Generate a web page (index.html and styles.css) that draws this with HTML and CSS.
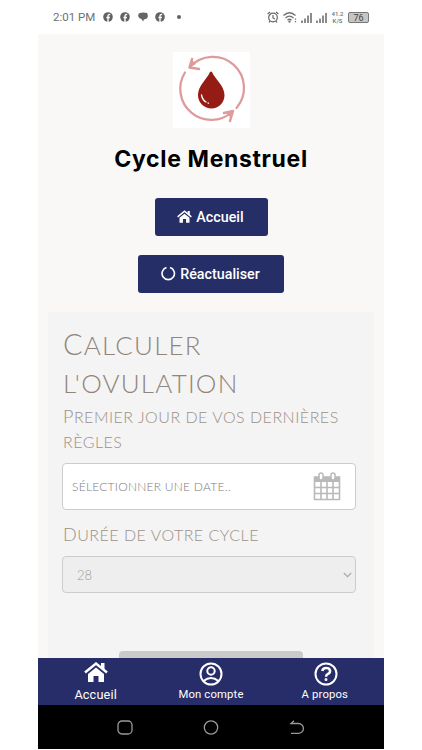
FILE: index.html
```html
<!DOCTYPE html>
<html lang="fr">

<head>
    <meta charset="UTF-8">
    <meta name="viewport" content="width=device-width, initial-scale=1.0">
    <title>Cycle Menstruel</title>
    <link rel="stylesheet" href="styles.css">
</head>

<body>
    <svg class="defs" width="0" height="0">
        <symbol id="home" viewBox="0 0 24 20">
            <path d="M1 10.5 12 1.5l11 9" fill="none" stroke="currentColor" stroke-width="2.4"/>
            <path d="M17 1h3.5v8L17 6zM12 5.5l8 6.5v8h-5.5v-6h-5v6H4v-8z" fill="currentColor"/>
        </symbol>
        <symbol id="facebook" viewBox="0 0 10 10">
            <circle cx="5" cy="5" r="4.8" fill="#626262"/>
            <path d="M5 10V4.3c0-1.4.7-2 2.2-1.8M3.4 5.5h3.5" fill="none" stroke="#fff" stroke-width="1.35"/>
        </symbol>
        <symbol id="signal" viewBox="0 0 11 11">
            <path d="M1 11V8.500M4 11V6.500M7 11V3.500M10 11V1" stroke="#707070" stroke-width="1.600"/>
        </symbol>
    </svg>

    <div class="phone">
        <!-- barre d'état -->
        <div class="status">
            <span class="time">2:01 PM</span>
            <svg class="fb" width="10" height="10"><use href="#facebook"/></svg>
            <svg class="fb" width="10" height="10"><use href="#facebook"/></svg>
            <svg class="fb" width="10" height="10" viewBox="0 0 10 10"><path d="M2 1Q5 0 9 1q1 1 .8 4Q9 7 6 7.500L5 9.500 3.500 7Q0 6 .2 3 .5 1 2 1z" fill="#666"/></svg>
            <svg class="fb" width="10" height="10"><use href="#facebook"/></svg>
            <span class="dot"></span>
            <div class="status_right">
                <svg width="12" height="12" viewBox="0 0 12 12" fill="none" stroke="#666" stroke-width="1.2"><circle cx="6" cy="6.500" r="4.300"/><path d="M.6 3 3 1M11.400 3 9 1M6 4v3l2 1M3 10l-1 1.500M9 10l1 1.500"/></svg>
                <svg width="14" height="12" viewBox="0 0 14 12" fill="none" stroke="#707070" stroke-width="1.3"><path d="M.5 4.500q6-5.500 12 0M2.500 7q4-3.800 8 0M4.500 9.200q2-1.800 4 0"/><circle cx="6.500" cy="10.700" r=".5"/><path d="M12.500 7.500v1.300M12.500 10v1.300"/></svg>
                <svg width="11" height="11"><use href="#signal"/></svg>
                <svg width="11" height="11"><use href="#signal"/></svg>
                <span class="speed"><span>41.2</span><span>K/S</span></span>
                <span class="battery">76</span>
            </div>
        </div>

        <main class="content">
            <svg class="logo" width="77" height="76" viewBox="0 0 77 76">
                <path d="M17 15A31 31 0 0 1 63.500 56M59 60A31 31 0 0 1 12 20.500" fill="none" stroke="#df9b9c" stroke-width="2.300" stroke-linecap="round"/>
                <path d="M19 7 16.500 15.500 26 17M51 61l9-2-3 10" fill="none" stroke="#df9b9c" stroke-width="2.500" stroke-linecap="round" stroke-linejoin="round"/>
                <path d="M19 8l-2 7 6-3zM53 61l7-2-2 7z" fill="#df9b9c"/>
                <path d="M37 20q1-1 2 0C42 27 51.500 34 51.500 43c0 8-6 13.500-13 13.500S25 51 25 43c0-9 9-16 12-23z" fill="#951b15"/>
                <path d="M28.500 43q1 5 4.500 7M35 51l.5.200" fill="none" stroke="#fff" stroke-width="1.300" stroke-linecap="round"/>
            </svg>
            <h1>Cycle Menstruel</h1>
            <button class="btn btn_home"><svg width="15" height="13"><use href="#home"/></svg>Accueil</button>
            <button class="btn btn_reload"><svg width="15" height="15" viewBox="0 0 15 15"><path d="M9 1.500a6.200 6.200 0 1 1-3.500 0" fill="none" stroke="#fff" stroke-width="1.600"/></svg>Réactualiser</button>

            <section class="card">
                <h2><span class="line">Calculer</span><span class="line">l'ovulation</span></h2>
                <p class="label label_day"><span class="line">Premier jour de vos dernières</span><span class="line">règles</span></p>
                <div class="field date">
                    <span class="placeholder">Sélectionner une date..</span>
                    <svg width="28" height="29" viewBox="0 0 28 29">
                        <path d="M1 5h26v5H1z" fill="#b9b9b9"/>
                        <path d="M1.500 5h25v22.500h-25zM8 9v18M14 9v18M20 9v18M1 15.500h26M1 21.500h26" fill="none" stroke="#b9b9b9" stroke-width="1.600"/>
                        <rect x="6" y="1" width="4" height="7" rx="2" fill="#fff" stroke="#b9b9b9" stroke-width="1.500"/>
                        <rect x="18" y="1" width="4" height="7" rx="2" fill="#fff" stroke="#b9b9b9" stroke-width="1.500"/>
                    </svg>
                </div>
                <p class="label label_cycle"><span class="line">Durée de votre cycle</span></p>
                <div class="field select">
                    <span>28</span>
                    <svg width="9" height="6" viewBox="0 0 9 6"><path d="m.8 1 3.700 3.700L8.200 1" fill="none" stroke="#a8a8a8" stroke-width="1.200"/></svg>
                </div>
                <div class="submit"></div>
            </section>
        </main>

        <nav class="tabs">
            <a class="tab tab_active"><svg width="24" height="20"><use href="#home"/></svg>Accueil</a>
            <a class="tab"><svg width="24" height="24" viewBox="0 0 24 24" fill="none" stroke="#fff" stroke-width="2"><circle cx="12" cy="12" r="10.500"/><circle cx="12" cy="9" r="3.700"/><path d="M4.500 19q7.500-6 15 0"/></svg>Mon compte</a>
            <a class="tab tab_about"><svg width="24" height="24" viewBox="0 0 24 24" fill="none" stroke="#fff"><circle cx="12" cy="12" r="10.500" stroke-width="2"/><path d="M8.300 9q.5-3 3.700-3c5 0 5 4.500 2 5.800-1.500.8-2 1.200-2 3" stroke-width="2.500"/><circle cx="12" cy="17.500" r=".6" stroke-width="1.800"/></svg><span>A propos</span></a>
        </nav>

        <div class="system">
            <svg width="16" height="15" viewBox="0 0 16 15"><rect x="1" y="1" width="14" height="13" rx="4"/></svg>
            <svg width="16" height="15" viewBox="0 0 16 15"><circle cx="8" cy="7.500" r="6.700"/></svg>
            <svg width="16" height="15" viewBox="0 0 16 15"><path d="M5 .8 2 3.500h7.500a4.900 4.900 0 0 1 0 9.800H2"/></svg>
        </div>
    </div>
</body>

</html>
```

FILE: styles.css
```css
* {
    box-sizing: border-box;
}

body {
    margin: 0;
    background-color: #fff;
    font-family: Roboto, "Liberation Sans", sans-serif;
}

svg {
    display: block;
    flex: none;
}

.defs {
    position: absolute;
}

.phone {
    width: 346px;
    height: 749px;
    margin-left: 38px;
    display: flex;
    flex-direction: column;
    overflow: hidden;
}

/* barre d'état */
.status {
    height: 34px;
    flex: none;
    display: flex;
    align-items: center;
    padding: 0 15px;
    color: #707070;
}

.time {
    width: 50px;
    font-size: 11.5px;
    white-space: nowrap;
}

.fb {
    margin-right: 7.3px;
}

.dot {
    width: 4px;
    height: 4px;
    margin-left: 5px;
    border-radius: 50%;
    background-color: #626262;
}

.status_right {
    margin-left: auto;
    display: flex;
    align-items: center;
    gap: 4px;
}

.speed {
    width: 13px;
    display: flex;
    flex-direction: column;
    align-items: center;
    font-size: 6px;
    line-height: 7px;
    font-weight: 500;
}

.battery {
    width: 21px;
    height: 11px;
    border: 1px solid #777;
    border-radius: 2px;
    background-color: #c6c6c6;
    color: #444;
    font-size: 9px;
    line-height: 10px;
    text-align: center;
}

.content {
    flex: 1;
    min-height: 0;
    overflow: hidden;
    display: flex;
    flex-direction: column;
    align-items: center;
    padding: 18px 10px 0;
    background-color: #f9f8f6;
}

.logo {
    background-color: #fff;
}

h1 {
    margin: 15px 0 23px;
    font-family: Inter, "Liberation Sans", sans-serif;
    font-size: 23px;
    line-height: 32px;
    font-weight: 700;
    letter-spacing: 0.65px;
    color: #000;
    white-space: nowrap;
}

.btn {
    height: 38px;
    flex: none;
    display: flex;
    align-items: center;
    justify-content: center;
    gap: 4px;
    padding: 0 1px 1px 0;
    border: none;
    border-radius: 3px;
    background-color: #252e66;
    color: #fff;
    font-family: Roboto, sans-serif;
    font-size: 14.3px;
    font-weight: 500;
}

.btn_home {
    width: 113px;
}

.btn_reload {
    width: 146px;
    margin: 19px 0;
}

.card {
    width: 326px;
    flex: none;
    padding: 14px 18px 0 14px;
    background-color: #f4f4f4;
    font-family: Lato, "Open Sans", sans-serif;
    font-weight: 300;
    text-transform: uppercase;
    color: #91857b;
}

.line {
    display: block;
    white-space: nowrap;
}

h2 {
    margin: 0;
    padding-left: 1px;
    font-size: 26px;
    line-height: 37px;
    font-weight: 300;
    letter-spacing: 1.2px;
}

h2 .line {
    height: 39px;
}

h2 .line:first-child {
    line-height: 35px;
}

h2 .line:first-child::first-letter {
    font-size: 29px;
}

.label {
    margin: 0;
    padding-left: 1px;
    font-size: 16px;
    line-height: 25px;
    letter-spacing: 0.5px;
    color: #9c9188;
}

.label .line {
    height: 25px;
}

.label .line:first-child::first-letter {
    font-size: 18px;
}

.field {
    display: flex;
    align-items: center;
    justify-content: space-between;
    border: 1px solid #cfcbcd;
    border-radius: 4px;
}

.date {
    height: 47px;
    margin: 9px 0 12px;
    padding: 0 14px 0 9px;
    background-color: #fff;
    color: #7c7c7c;
    font-size: 12px;
}

.placeholder {
    letter-spacing: 0.25px;
}

.select {
    height: 37px;
    margin-top: 9px;
    padding: 0 3px 0 14px;
    background-color: #eee;
    color: #9d9d9d;
    font-size: 13px;
}

.submit {
    width: 184px;
    height: 40px;
    margin: 58px 0 0 57px;
    border-radius: 4px;
    background-color: #cacaca;
}

/* menu du bas */
.tabs {
    height: 47px;
    flex: none;
    display: grid;
    grid-template-columns: repeat(3, 1fr);
    background-color: #272d68;
    color: #fff;
}

.tab {
    display: flex;
    flex-direction: column;
    align-items: center;
    padding-top: 4px;
    font-size: 11.3px;
    line-height: 17px;
    letter-spacing: 0.15px;
}

.tab_active {
    font-size: 12.7px;
}

.tab_active svg {
    margin-bottom: 4px;
}

.tab_about span {
    padding-right: 3px;
}

.system {
    height: 44px;
    flex: none;
    display: flex;
    align-items: center;
    justify-content: center;
    gap: 70px;
    background-color: #000;
}

.system svg {
    fill: none;
    stroke: #999;
    stroke-width: 1.3;
}
```
